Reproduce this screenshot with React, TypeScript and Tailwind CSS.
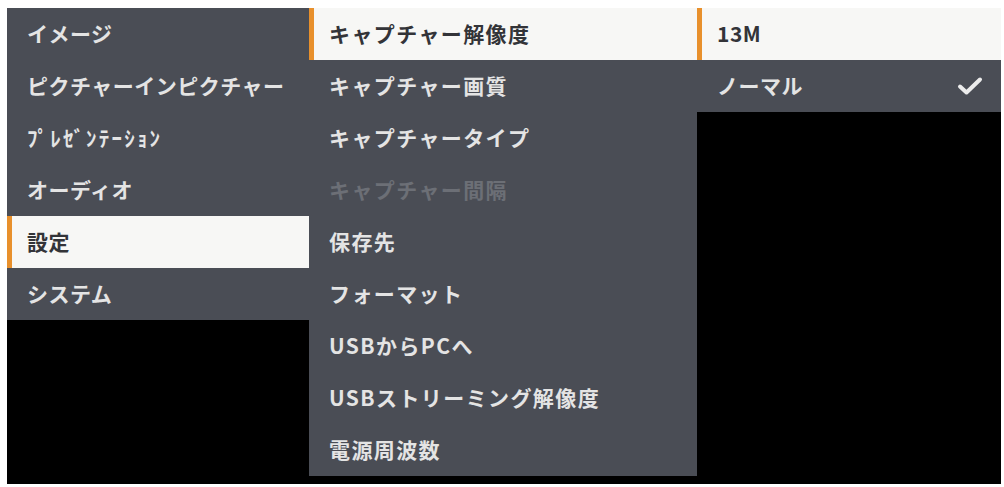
import React from 'react'

type Item = { label: string; state?: 'active' | 'disabled' | 'normal'; check?: boolean; wide?: boolean }

const mainMenu: Item[] = [
  { label: 'イメージ' },
  { label: 'ピクチャーインピクチャー' },
  { label: 'ﾌﾟﾚｾﾞﾝﾃｰｼｮﾝ', wide: true },
  { label: 'オーディオ' },
  { label: '設定', state: 'active' },
  { label: 'システム' }
]

const settingsMenu: Item[] = [
  { label: 'キャプチャー解像度', state: 'active' },
  { label: 'キャプチャー画質' },
  { label: 'キャプチャータイプ' },
  { label: 'キャプチャー間隔', state: 'disabled' },
  { label: '保存先' },
  { label: 'フォーマット' },
  { label: 'USBからPCへ' },
  { label: 'USBストリーミング解像度' },
  { label: '電源周波数' }
]

const valueMenu: Item[] = [
  { label: '13M', state: 'active' },
  { label: 'ノーマル', check: true }
]

function CheckMark(): JSX.Element {
  return (
    <svg width="26" height="20" viewBox="0 0 26 20" aria-hidden>
      <path
        d="M3 10.5 L9.5 16.5 L23 3.5"
        fill="none"
        stroke="#ececec"
        strokeWidth="4"
        strokeLinecap="round"
        strokeLinejoin="round"
      />
    </svg>
  )
}

function MenuRow({ item, spaced }: { item: Item; spaced?: boolean }): JSX.Element {
  const active = item.state === 'active'
  const disabled = item.state === 'disabled'
  return (
    <div
      className={
        active
          ? 'relative flex h-[52px] items-center bg-[#f7f7f5] pl-[20px] pr-[18px] text-[#333438]'
          : disabled
            ? 'flex h-[52px] items-center pl-[20px] pr-[18px] text-[#6c6f76]'
            : 'flex h-[52px] items-center pl-[20px] pr-[18px] text-[#e4e4e4]'
      }
    >
      {active && <span className="absolute left-0 top-0 h-full w-[5px] bg-[#e8902c]" />}
      <span
        className={
          item.wide
            ? 'flex-1 whitespace-nowrap tracking-[2.2px]'
            : spaced
              ? 'flex-1 whitespace-nowrap tracking-[1.4px]'
              : 'flex-1 whitespace-nowrap tracking-[0.5px]'
        }
      >
        {item.label}
      </span>
      {item.check && <CheckMark />}
    </div>
  )
}

export default function App(): JSX.Element {
  return (
    <div className="h-[487px] w-[1004px] bg-white pl-[7px] pt-[8px]">
      <div
        className="flex h-[476px] w-[994px] items-start bg-black text-[21px] font-bold"
        style={{ fontFamily: '"Noto Sans CJK JP", "Noto Sans", sans-serif' }}
      >
        <div className="w-[302px] bg-[#4a4d55]">
          {mainMenu.map((m) => (
            <MenuRow key={m.label} item={m} />
          ))}
        </div>
        <div className="w-[388px] bg-[#4a4d55]">
          {settingsMenu.map((m) => (
            <MenuRow key={m.label} item={m} spaced />
          ))}
        </div>
        <div className="flex-1 bg-[#4a4d55]">
          {valueMenu.map((m) => (
            <MenuRow key={m.label} item={m} />
          ))}
        </div>
      </div>
    </div>
  )
}
